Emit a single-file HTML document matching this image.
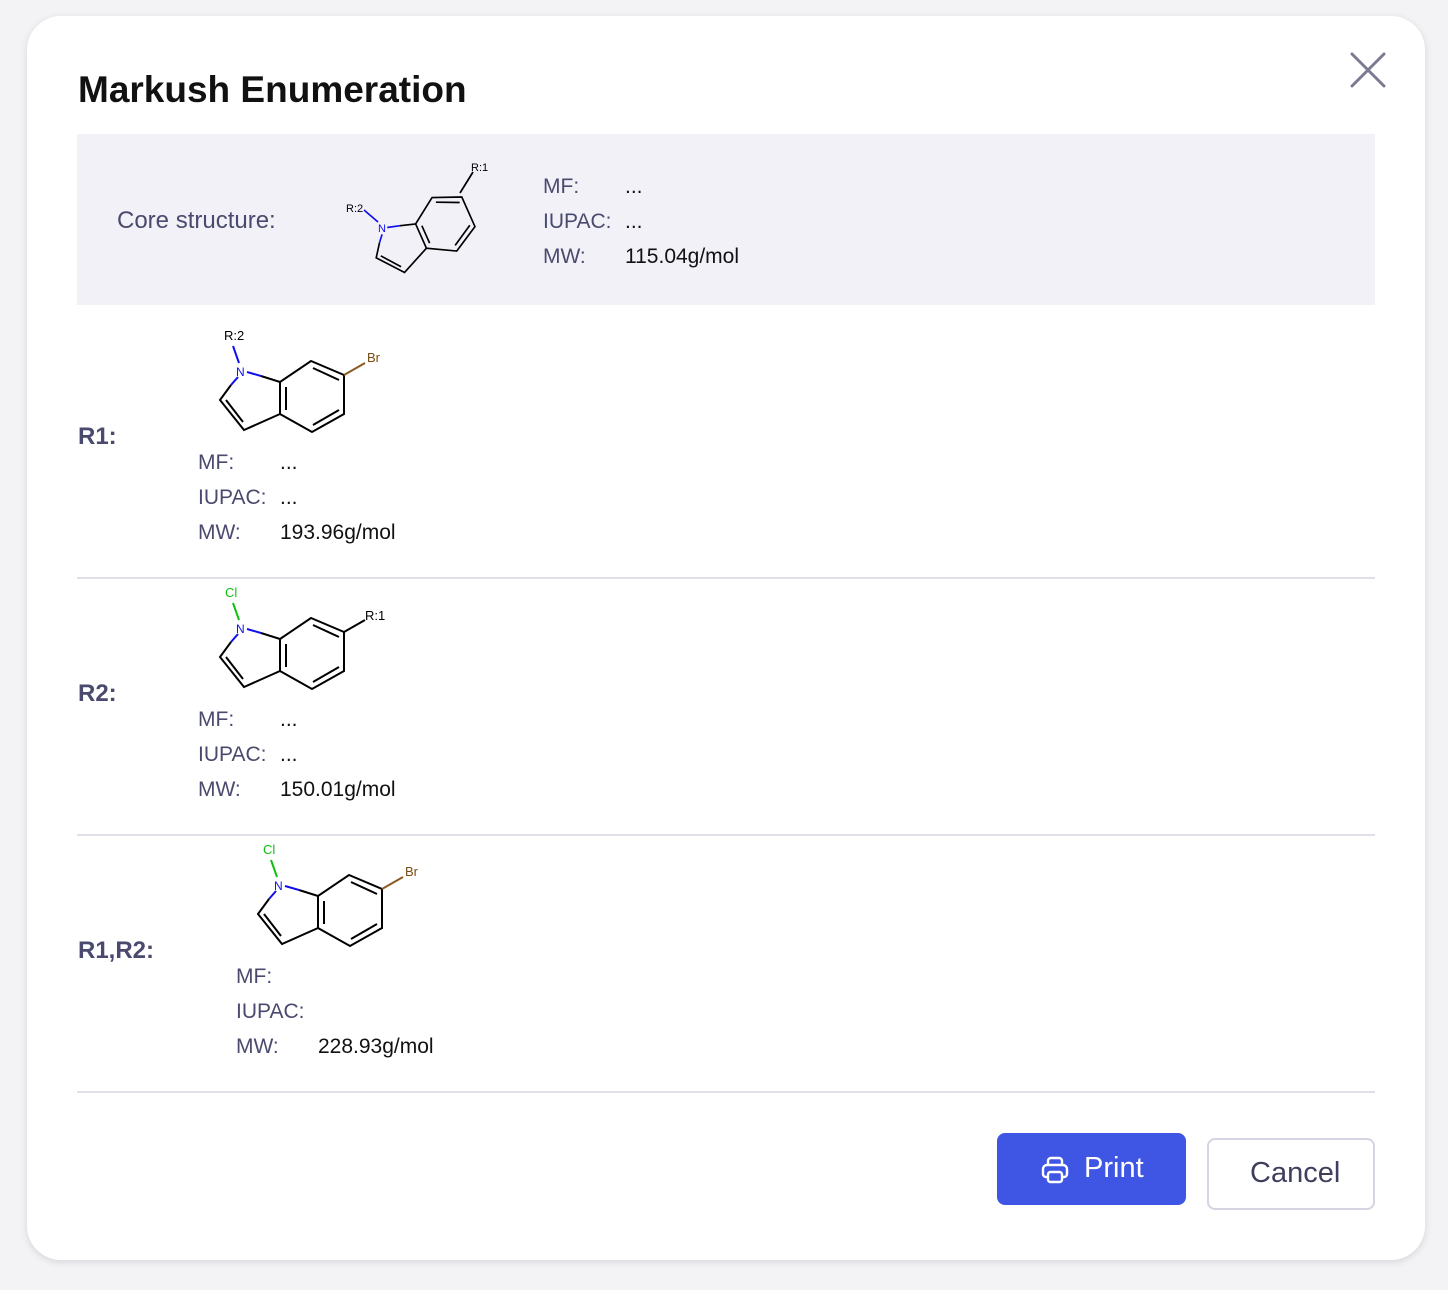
<!DOCTYPE html>
<html><head><meta charset="utf-8"><style>
body{margin:0;width:1448px;height:1290px;background:#f3f3f6;font-family:"Liberation Sans",sans-serif;position:relative;overflow:hidden}
.card{position:absolute;left:27px;top:16px;width:1398px;height:1244px;background:#fff;border-radius:34px;box-shadow:0 2px 8px rgba(0,0,0,.12)}
.a{position:absolute;white-space:nowrap}
.lab{color:#4a4a6e;font-size:21px}
.val{color:#111;font-size:21px}
.hr{position:absolute;left:77px;width:1298px;height:2px;background:#e0e0ea}
</style></head><body>
<div class="card"></div>
<div class="a" style="left:78px;top:69px;font-size:37px;font-weight:bold;color:#111">Markush Enumeration</div>
<svg class="a" style="left:1350px;top:52px" width="36" height="36"><path d="M2,2L34,34M34,2L2,34" stroke="#7a7a92" stroke-width="3" stroke-linecap="round"/></svg>
<div class="a" style="left:77px;top:134px;width:1298px;height:171px;background:#f1f1f7"></div>
<div class="a lab" style="left:117px;top:207px;font-size:24px">Core structure:</div>
<div class="a lab" style="left:543px;top:175px">MF:</div><div class="a val" style="left:625px;top:175px">...</div>
<div class="a lab" style="left:543px;top:210px">IUPAC:</div><div class="a val" style="left:625px;top:210px">...</div>
<div class="a lab" style="left:543px;top:245px">MW:</div><div class="a val" style="left:625px;top:245px">115.04g/mol</div>

<div class="a lab" style="left:78px;top:423px;font-size:24px;font-weight:bold">R1:</div>
<div class="a lab" style="left:198px;top:451px">MF:</div><div class="a val" style="left:280px;top:451px">...</div>
<div class="a lab" style="left:198px;top:486px">IUPAC:</div><div class="a val" style="left:280px;top:486px">...</div>
<div class="a lab" style="left:198px;top:521px">MW:</div><div class="a val" style="left:280px;top:521px">193.96g/mol</div>
<div class="hr" style="top:577px"></div>

<div class="a lab" style="left:78px;top:680px;font-size:24px;font-weight:bold">R2:</div>
<div class="a lab" style="left:198px;top:708px">MF:</div><div class="a val" style="left:280px;top:708px">...</div>
<div class="a lab" style="left:198px;top:743px">IUPAC:</div><div class="a val" style="left:280px;top:743px">...</div>
<div class="a lab" style="left:198px;top:778px">MW:</div><div class="a val" style="left:280px;top:778px">150.01g/mol</div>
<div class="hr" style="top:834px"></div>

<div class="a lab" style="left:78px;top:937px;font-size:24px;font-weight:bold">R1,R2:</div>
<div class="a lab" style="left:236px;top:965px">MF:</div>
<div class="a lab" style="left:236px;top:1000px">IUPAC:</div>
<div class="a lab" style="left:236px;top:1035px">MW:</div><div class="a val" style="left:318px;top:1035px">228.93g/mol</div>
<div class="hr" style="top:1091px"></div>

<div class="a" style="left:997px;top:1133px;width:189px;height:72px;background:#3f55e4;border-radius:8px"></div>
<svg class="a" style="left:1040px;top:1155px" width="30" height="30" fill="none" stroke="#fff" stroke-width="2.4" stroke-linejoin="round"><path d="M8,9V6a3,3 0 0 1 3-3h8a3,3 0 0 1 3,3v3"/><path d="M8,22H6a3,3 0 0 1-3-3v-5a4,4 0 0 1 4-4h16a4,4 0 0 1 4,4v5a3,3 0 0 1-3,3h-2"/><rect x="8" y="17" width="14" height="10" rx="2.5"/></svg>
<div class="a" style="left:1084px;top:1152px;color:#fff;font-size:29px">Print</div>
<div class="a" style="left:1207px;top:1138px;width:164px;height:68px;border:2px solid #d4d4e2;border-radius:8px"></div>
<div class="a" style="left:1250px;top:1157px;color:#3e3e5e;font-size:29px">Cancel</div>

<svg class="a" style="left:0;top:0" width="1448" height="1290" font-family="Liberation Sans,sans-serif">
<defs>
<g id="bnd" fill="none" stroke-width="2">
<path stroke="#000" d="M20,6L39,12L70,-9L103,5L103,44L71,62L39,44L39,12M39,44L3,60L-21,30L-10,15M45,17L45,40M72,-2L98,10M98,40L72,55M2,52L-15,30"/>
<path stroke="#1010ee" d="M6,2L20,6M-10,15L-3,7"/>
</g>
<g id="ind"><use href="#bnd"/><text x="-5" y="6" font-size="12" fill="#1010ee">N</text></g>
</defs>
<g transform="translate(241,370)"><use href="#ind"/>
<path d="M-2,-7L-8,-24" stroke="#1010ee" stroke-width="2"/><text x="-17" y="-30" font-size="13">R:2</text>
<path d="M103,5L124,-7" stroke="#8a5a20" stroke-width="2"/><text x="126" y="-8" font-size="13" fill="#7a4a10">Br</text></g>
<g transform="translate(241,627)"><use href="#ind"/>
<path d="M-2,-7L-8,-24" stroke="#10c010" stroke-width="2"/><text x="-16" y="-30" font-size="13" fill="#10c010">Cl</text>
<path d="M103,5L124,-7" stroke="#000" stroke-width="2"/><text x="124" y="-7" font-size="13">R:1</text></g>
<g transform="translate(279,884)"><use href="#ind"/>
<path d="M-2,-7L-8,-24" stroke="#10c010" stroke-width="2"/><text x="-16" y="-30" font-size="13" fill="#10c010">Cl</text>
<path d="M103,5L124,-7" stroke="#8a5a20" stroke-width="2"/><text x="126" y="-8" font-size="13" fill="#7a4a10">Br</text></g>
<g transform="translate(382,228) rotate(-24) scale(0.83)"><use href="#bnd"/></g>
<text x="378" y="232" font-size="11" fill="#1010ee">N</text>
<path d="M378,222L364,210" stroke="#1010ee" stroke-width="1.7"/><text x="346" y="212" font-size="11">R:2</text>
<path d="M460,193L473,172" stroke="#000" stroke-width="1.7"/><text x="471" y="171" font-size="11">R:1</text>
</svg>
</body></html>
